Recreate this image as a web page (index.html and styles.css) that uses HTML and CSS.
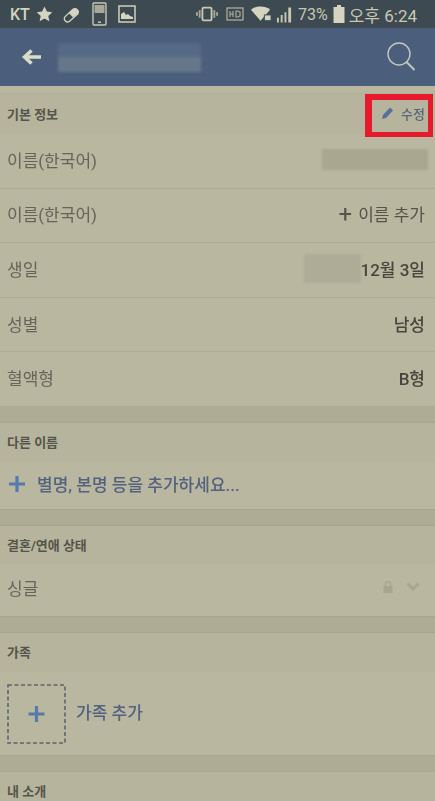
FILE: index.html
```html
<!DOCTYPE html>
<html lang="ko">
<head>
  <meta charset="UTF-8" />
  <meta name="viewport" content="width=device-width, initial-scale=1.0"/>
  <title>기본 정보</title>
  <link rel="stylesheet" href="styles.css">
</head>
<body>
  <div class="status">
    <div class="status-left">
      <span class="carrier">KT</span>
      <svg width="17" height="16" viewBox="0 0 17 16"><path d="M8.5 0.5l2.4 5 5.4.7-4 3.7 1.1 5.4-4.9-2.7-4.9 2.7 1.1-5.4-4-3.7 5.4-.7z" fill="#d5d4c0"/></svg>
      <svg class="ic-pill" width="19" height="17" viewBox="0 0 20 18"><path d="M3 11.5L11.5 3.5a3.6 3.6 0 0 1 5 5L8 16.2a3.5 3.5 0 0 1-5-4.700z" fill="none" stroke="#d5d4c0" stroke-width="1.400"/><path d="M7 7.500l4.500 4.500L16.500 8.500a3.600 3.600 0 0 0-5-5z" fill="#d5d4c0"/></svg>
      <svg class="ic-tablet" width="15" height="24" viewBox="0 0 15 24"><rect x="1" y="1" width="13" height="22" rx="1" fill="#3d4a51" stroke="#c8c7b4" stroke-width="1.400"/><rect x="2.500" y="3" width="10" height="8" fill="#a9a99a"/><rect x="6" y="19.500" width="3" height="1.500" fill="#c8c7b4"/></svg>
      <svg class="ic-pic" width="18" height="18" viewBox="0 0 18 18"><rect x="1" y="1" width="16" height="16" fill="#3d4a51" stroke="#c8c7b4" stroke-width="1.600"/><path d="M3 14V9l3-2 2 3 2-1 2 2 3 1v2z" fill="#d5d4c0"/></svg>
    </div>
    <div class="status-right">
      <svg width="22" height="16" viewBox="0 0 24 16"><rect x="7" y="1" width="10" height="14" rx="1.500" fill="none" stroke="#c8c7b4" stroke-width="2"/><path d="M4 4v8M1 6v4M20 4v8M23 6v4" stroke="#a9a99a" stroke-width="2"/></svg>
      <svg class="ic-hd" width="18" height="14" viewBox="0 0 18 14"><rect x="1" y="1" width="16" height="12" fill="none" stroke="#b4b3a1" stroke-width="1.200"/><path d="M4 4v6M7 4v6M4 7h3M10 4v6h2l2-1V5l-2-1z" fill="none" stroke="#b4b3a1" stroke-width="1.100"/></svg>
      <svg class="ic-wifi" width="21" height="16" viewBox="0 0 22 16"><path d="M0 3.500C5-1 15-1 20 3.500L10 15z" fill="#d5d4c0"/><rect x="14" y="9" width="7" height="6" fill="#d5d4c0" stroke="#3d4a51"/></svg>
      <svg class="ic-signal" width="17" height="17" viewBox="0 0 18 17"><path d="M1 12h2v5H1zM5 9h2v8H5zM9 6h2v11H9zM13 1h3v16h-3z" fill="#c8c7b4"/></svg>
      <span class="pct">73%</span>
      <svg class="ic-batt" width="12" height="18" viewBox="0 0 12 18"><path d="M4 0h4v2h3.500v16H.5V2H4z" fill="#d5d4c0"/></svg>
      <span class="clock">오후 6:24</span>
    </div>
  </div>

  <div class="topbar">
    <svg class="back" width="22" height="18" viewBox="0 0 22 18"><path d="M20 9H5M10.500 2.500L3.500 9l7 6.500" fill="none" stroke="#dcdbc6" stroke-width="3.500"/></svg>
    <div class="title-blur"></div>
    <svg class="search" width="30" height="30" viewBox="0 0 30 30"><circle cx="12" cy="12" r="11" fill="none" stroke="#c3c6bd" stroke-width="1.400"/><path d="M19.500 20l8 8" stroke="#c3c6bd" stroke-width="2"/></svg>
  </div>

  <div class="strip"></div>

  <div class="section-head first">
    <span>기본 정보</span>
    <span class="edit">
      <svg width="14" height="14" viewBox="0 0 14 14"><path d="M1 13l1-4 7-7.500 3 3L5 12z" fill="#56709a"/></svg>
      수정
    </span>
    <div class="mark"></div>
  </div>
  <div class="row"><span>이름(한국어)</span><div class="blur blur-name"></div></div>
  <div class="row"><span>이름(한국어)</span><span class="val add"><b>+</b> 이름 추가</span></div>
  <div class="row"><span>생일</span><span class="val"><i class="blur blur-year"></i>12월 3일</span></div>
  <div class="row"><span>성별</span><span class="val">남성</span></div>
  <div class="row"><span>혈액형</span><span class="val">B형</span></div>

  <div class="gap"></div>
  <div class="section-head">다른 이름</div>
  <div class="row-add">
    <svg width="16" height="16" viewBox="0 0 16 16"><path d="M8 0v16M0 8h16" stroke="#557aab" stroke-width="3.200"/></svg>
    <span>별명, 본명 등을 추가하세요...</span>
  </div>

  <div class="gap"></div>
  <div class="section-head">결혼/연애 상태</div>
  <div class="row single">
    <span>싱글</span>
    <span class="privacy">
      <svg width="12" height="13" viewBox="0 0 12 13"><path d="M3.500 6V4a2.500 2.500 0 0 1 5 0v2" fill="none" stroke="#a8a690" stroke-width="1.500"/><rect x="1.500" y="6" width="9" height="7" fill="#a8a690"/></svg>
      <svg width="14" height="9" viewBox="0 0 14 9"><path d="M1.500 1.500L7 7l5.500-5.500" fill="none" stroke="#a8a690" stroke-width="3"/></svg>
    </span>
  </div>

  <div class="gap"></div>
  <div class="section-head">가족</div>
  <div class="family">
    <svg width="59" height="60" viewBox="0 0 59 60">
      <rect x="1" y="1" width="57" height="58" fill="none" stroke="#5d6470" stroke-width="1.600" stroke-dasharray="4 2.500"/>
      <path d="M29.500 22v16M21.500 30h16" stroke="#557aab" stroke-width="3.200"/>
    </svg>
    <span>가족 추가</span>
  </div>

  <div class="gap"></div>
  <div class="section-head">내 소개</div>
</body>
</html>
```

FILE: styles.css
```css
body {
  font-family: Roboto, 'Noto Sans CJK KR', sans-serif;
  background: #b9b79f;
  color: #56554a;
  margin: 0;
  height: 801px;
  overflow: hidden;
  filter: blur(0.5px);
}
.status {
  height: 28px;
  background: #3d4a51;
  color: #c8c7b4;
  display: flex;
  justify-content: space-between;
  align-items: center;
  padding: 0 18px 0 10px;
}
.status-left, .status-right {
  display: flex;
  align-items: center;
}
.status-left svg {
  margin-left: 6px;
}
.status-left .ic-pill {
  margin-left: 9px;
}
.status-left .ic-tablet {
  margin-left: 11px;
}
.status-left .ic-pic {
  margin-left: 11px;
}
.status-right .ic-hd {
  margin-left: 8px;
}
.status-right .ic-wifi {
  margin-left: 7px;
}
.status-right .ic-signal {
  margin-left: 4px;
}
.status-right .ic-batt {
  margin-right: 4px;
}
.carrier {
  font-size: 16px;
  font-weight: 500;
  color: #d5d4c0;
}
.pct {
  font-size: 16px;
  margin: 0 5px;
}
.clock {
  font-size: 17px;
}
.topbar {
  height: 58px;
  background: #4b5f7d;
  display: flex;
  align-items: center;
  padding: 0 18px 0 21px;
}
.back {
  flex: none;
}
.title-blur {
  width: 143px;
  height: 29px;
  margin-left: 15px;
  background: linear-gradient(to bottom, #566a85 50%, #66778c 50%);
  filter: blur(1.500px);
}
.search {
  margin-left: auto;
}
.strip {
  height: 7px;
  border-bottom: 1px solid #b0ae96;
}
.section-head {
  height: 38.500px;
  padding: 0 10px 3px 7px;
  background: #b6b49c;
  font-size: 13px;
  font-weight: 700;
  color: #55544a;
  display: flex;
  align-items: center;
  justify-content: space-between;
  box-sizing: border-box;
  position: relative;
}
.section-head.first {
  height: 40px;
  padding-bottom: 2px;
}
.edit {
  display: flex;
  align-items: center;
  gap: 6px;
  color: #56657c;
  font-size: 13px;
  font-weight: 500;
}
.mark {
  position: absolute;
  left: 365px;
  top: 0;
  width: 68px;
  height: 43px;
  border: 6px solid #e8192c;
  border-width: 6px 5px 5px 7px;
  box-sizing: border-box;
}
.row {
  height: 54.600px;
  box-sizing: border-box;
  padding: 0 10px 3px 7px;
  display: flex;
  align-items: center;
  justify-content: space-between;
  border-bottom: 1px solid #aeac94;
  font-size: 17px;
  color: #66655a;
}
.val {
  color: #46463c;
  font-size: 17px;
  font-weight: 500;
  display: flex;
  align-items: center;
}
.add {
  color: #55544a;
  font-weight: 400;
}
.add b {
  font-size: 24px;
  font-weight: 400;
  margin-right: 6px;
  line-height: 1;
}
.blur {
  display: block;
  background: #a9a78f;
  filter: blur(1px);
}
.blur-name {
  width: 106px;
  height: 21px;
  margin-right: -3px;
}
.blur-year {
  width: 57px;
  height: 29px;
  background: #aeac96;
}
.gap {
  height: 16.500px;
  background: #aeac95;
  border-bottom: 1px solid #a8a690;
  box-sizing: border-box;
}
.row-add {
  height: 48px;
  box-sizing: border-box;
  border-bottom: 1px solid #a8a690;
  padding: 0 0 3px 9px;
  display: flex;
  align-items: center;
  gap: 12px;
  color: #546280;
  font-size: 17px;
  font-weight: 500;
}
.row.single {
  height: 52px;
  padding-bottom: 5px;
  border-bottom: 1px solid #a8a690;
}
.privacy {
  display: flex;
  align-items: center;
  gap: 12px;
  margin: 0 5px 2px 0;
}
.family {
  height: 84px;
  box-sizing: border-box;
  padding: 2px 0 0 7px;
  display: flex;
  align-items: center;
  gap: 10px;
  color: #546280;
  font-size: 17px;
  font-weight: 500;
  border-bottom: 1px solid #a8a690;
}
.family span {
  margin-bottom: 6px;
}
```
